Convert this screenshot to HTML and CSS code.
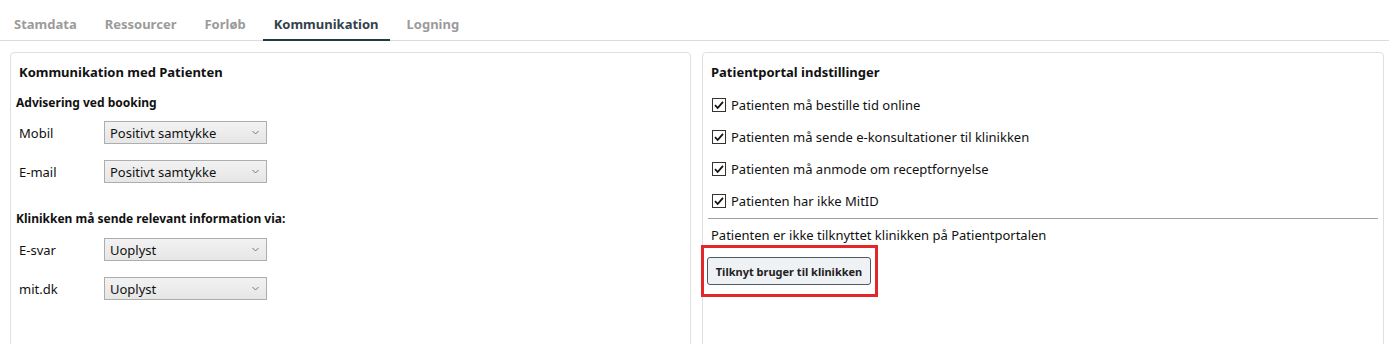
FILE: index.html
```html
<!DOCTYPE html>
<html lang="da">
<head>
<meta charset="utf-8">
<title>Kommunikation</title>
<link rel="stylesheet" href="styles.css">
</head>
<body>
<nav class="tabs">
  <span class="tab">Stamdata</span>
  <span class="tab">Ressourcer</span>
  <span class="tab">Forløb</span>
  <span class="tab active">Kommunikation</span>
  <span class="tab">Logning</span>
</nav>
<main class="panels">
  <section class="panel">
    <h2 class="panel-title">Kommunikation med Patienten</h2>
    <h3 class="sub">Advisering ved booking</h3>
    <div class="row"><span class="label">Mobil</span><div class="select"><span>Positivt samtykke</span><svg class="chev" width="7" height="5" viewBox="0 0 7 5"><path d="M0.5 1 L3.5 4 L6.5 1" fill="none" stroke="#777" stroke-width="1"/></svg></div></div>
    <div class="row"><span class="label">E-mail</span><div class="select"><span>Positivt samtykke</span><svg class="chev" width="7" height="5" viewBox="0 0 7 5"><path d="M0.5 1 L3.5 4 L6.5 1" fill="none" stroke="#777" stroke-width="1"/></svg></div></div>
    <h3 class="sub sub2">Klinikken må sende relevant information via:</h3>
    <div class="row"><span class="label">E-svar</span><div class="select"><span>Uoplyst</span><svg class="chev" width="7" height="5" viewBox="0 0 7 5"><path d="M0.5 1 L3.5 4 L6.5 1" fill="none" stroke="#777" stroke-width="1"/></svg></div></div>
    <div class="row"><span class="label">mit.dk</span><div class="select"><span>Uoplyst</span><svg class="chev" width="7" height="5" viewBox="0 0 7 5"><path d="M0.5 1 L3.5 4 L6.5 1" fill="none" stroke="#777" stroke-width="1"/></svg></div></div>
  </section>
  <section class="panel">
    <h2 class="panel-title">Patientportal indstillinger</h2>
    <ul class="checks">
      <li class="check"><svg class="box" width="14" height="14" viewBox="0 0 14 14"><rect x="0.5" y="0.5" width="13" height="13" fill="#fff" stroke="#333"/><path d="M3 7.2 L5.7 10 L11 3.8" fill="none" stroke="#111" stroke-width="1.8"/></svg><span>Patienten må bestille tid online</span></li>
      <li class="check"><svg class="box" width="14" height="14" viewBox="0 0 14 14"><rect x="0.5" y="0.5" width="13" height="13" fill="#fff" stroke="#333"/><path d="M3 7.2 L5.7 10 L11 3.8" fill="none" stroke="#111" stroke-width="1.8"/></svg><span>Patienten må sende e-konsultationer til klinikken</span></li>
      <li class="check"><svg class="box" width="14" height="14" viewBox="0 0 14 14"><rect x="0.5" y="0.5" width="13" height="13" fill="#fff" stroke="#333"/><path d="M3 7.2 L5.7 10 L11 3.8" fill="none" stroke="#111" stroke-width="1.8"/></svg><span>Patienten må anmode om receptfornyelse</span></li>
      <li class="check"><svg class="box" width="14" height="14" viewBox="0 0 14 14"><rect x="0.5" y="0.5" width="13" height="13" fill="#fff" stroke="#333"/><path d="M3 7.2 L5.7 10 L11 3.8" fill="none" stroke="#111" stroke-width="1.8"/></svg><span>Patienten har ikke MitID</span></li>
    </ul>
    <hr class="divider">
    <p class="info">Patienten er ikke tilknyttet klinikken på Patientportalen</p>
    <div class="highlight"><button class="btn">Tilknyt bruger til klinikken</button></div>
  </section>
</main>
</body>
</html>
```
FILE: styles.css
```css
* { box-sizing: border-box; }
html, body { margin: 0; padding: 0; background: #fff; }
body {
  font-family: "Noto Sans", "Open Sans", sans-serif;
  font-size: 12px;
  color: #111;
  width: 1389px;
  height: 344px;
  overflow: hidden;
}
.tabs {
  display: flex;
  gap: 6px;
  padding-left: 3px;
  height: 41px;
  border-bottom: 1px solid #dcdcdc;
  align-items: stretch;
}
.tab {
  padding: 14px 11px 0;
  font-weight: 700;
  font-size: 13px;
  color: #9b9b9b;
  line-height: 20px;
}
.tab.active {
  color: #33414b;
  border-bottom: 2px solid #1e3a42;
  margin-bottom: -1px;
}
.panels {
  display: flex;
  gap: 11px;
  padding: 11px 0 0 10px;
}
.panel {
  border: 1px solid #dde0e3;
  border-radius: 4px;
  min-height: 310px;
  background: #fff;
}
.panel:first-child { width: 681px; }
.panel:last-child { width: 682px; padding: 0 5px; }
.panel-title {
  margin: 0;
  font-size: 13px;
  font-weight: 700;
  line-height: 20px;
  padding: 9px 0 0 8px;
  height: 30px;
}
.panel:last-child .panel-title { padding-left: 3px; }
.sub {
  margin: 0;
  font-size: 12px;
  font-weight: 700;
  line-height: 18px;
  padding: 11px 0 0 5px;
  height: 30px;
}
.sub2 { padding-top: 19px; height: 39px; }
.row {
  display: flex;
  align-items: center;
  height: 39px;
  padding-left: 8px;
}
.label {
  width: 85px;
  font-size: 13px;
  color: #111;
}
.select {
  width: 163px;
  height: 23px;
  border: 1px solid #adadad;
  background: linear-gradient(#f2f2f2, #e6e6e6);
  display: flex;
  align-items: center;
  justify-content: space-between;
  padding: 0 7px 0 5px;
  font-size: 13px;
  color: #111;
}
.chev { display: block; }
.checks {
  list-style: none;
  margin: 0;
  padding: 6px 0 0 4px;
}
.check {
  display: flex;
  align-items: center;
  gap: 5px;
  height: 32px;
  font-size: 13px;
}
.box { display: block; flex: none; }
.divider {
  border: 0;
  border-top: 1px solid #a0a0a0;
  margin: 1px 0 0;
  height: 0;
}
.info {
  margin: 0;
  font-size: 13px;
  line-height: 18px;
  padding: 7px 0 0 3px;
  height: 26px;
}
.highlight {
  width: 177px;
  height: 52px;
  margin-left: -7px;
  border: 3px solid #e3262a;
  padding: 9px 0 0 3px;
}
.btn {
  display: block;
  width: 164px;
  height: 28px;
  background: #eff2f5;
  border: 1px solid #4f5a63;
  border-radius: 3px;
  font-family: inherit;
  font-size: 11px;
  font-weight: 700;
  color: #222;
  padding: 0;
}
```
